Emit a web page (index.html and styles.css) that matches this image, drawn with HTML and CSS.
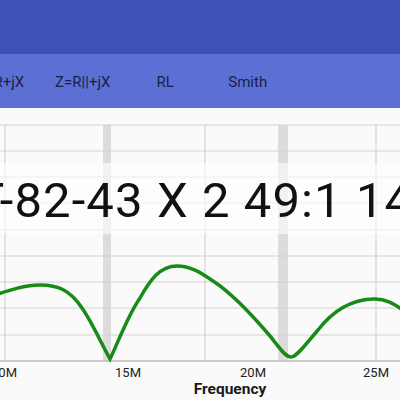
FILE: index.html
```html
<!DOCTYPE html>
<html lang="en">
<head>
    <meta charset="UTF-8">
    <meta name="viewport" content="width=device-width, initial-scale=1.0">
    <title>Antenna Analyzer</title>
    <link rel="stylesheet" href="styles.css">
</head>
<body>
    <div class="appbar"></div>
    <div class="tabs">
        <div class="tab">Z=R+jX</div>
        <div class="tab">Z=R||+jX</div>
        <div class="tab">RL</div>
        <div class="tab">Smith</div>
    </div>
    <div class="chart">
        <svg class="plot" width="400" height="292" viewBox="0 108 400 292">
            <!-- marker bands -->
            <rect x="103" y="125" width="8" height="236" fill="#dcdcdc"/>
            <rect x="278" y="125" width="10" height="236" fill="#dcdcdc"/>
            <!-- grid -->
            <g stroke="#d2d2d2" stroke-width="1.2">
                <line x1="0" y1="125" x2="400" y2="125"/>
                <line x1="0" y1="151" x2="400" y2="151"/>
                <line x1="0" y1="177" x2="400" y2="177"/>
                <line x1="0" y1="203" x2="400" y2="203"/>
                <line x1="0" y1="230" x2="400" y2="230"/>
                <line x1="0" y1="256" x2="400" y2="256"/>
                <line x1="0" y1="282" x2="400" y2="282"/>
                <line x1="0" y1="308" x2="400" y2="308"/>
                <line x1="0" y1="335" x2="400" y2="335"/>
                <line x1="5" y1="125" x2="5" y2="361"/>
                <line x1="205" y1="125" x2="205" y2="361"/>
                <line x1="376" y1="125" x2="376" y2="361"/>
            </g>
            <line x1="0" y1="361" x2="400" y2="361" stroke="#bdbdbd" stroke-width="1.5"/>
            <path d="M -5 295 C 10 290, 25 285, 40 285 C 58 285, 70 290, 82 308 C 92 322, 102 345, 110 359 C 117 345, 128 315, 140 298 C 150 280, 160 266, 177 266 C 190 266, 200 272, 213 281 C 233 294, 253 316, 270 336 C 279 347, 285 357, 291 357 C 297 357, 305 345, 318 330 C 332 312, 350 300, 372 299 C 385 298, 395 304, 405 312" fill="none" stroke="#188a18" stroke-width="3.5" stroke-linecap="round"/>
            <g class="ticks" text-anchor="middle">
                <text x="4" y="377">10M</text>
                <text x="128" y="377">15M</text>
                <text x="253" y="377">20M</text>
                <text x="376" y="377">25M</text>
            </g>
            <text class="axis-title" x="230" y="394" text-anchor="middle">Frequency</text>
        </svg>
        <div class="readout">T-82-43 X 2 49:1 14</div>
    </div>
</body>
</html>
```

FILE: styles.css
```css
body {
    margin: 0;
    width: 400px;
    height: 400px;
    overflow: hidden;
    font-family: Roboto, "Liberation Sans", sans-serif;
    background-color: #fafafa;
}
.appbar {
    height: 54px;
    background-color: #3f51b5;
}
.tabs {
    display: flex;
    height: 54px;
    margin-left: -41px;
    background-color: #5c6fd5;
}
.tab {
    flex: 0 0 82.5px;
    display: flex;
    align-items: center;
    justify-content: center;
    padding-top: 2px;
    font-size: 15px;
    color: #1a1f45;
    white-space: nowrap;
}
.chart {
    position: relative;
    height: 292px;
}
.plot {
    display: block;
}
.ticks {
    font-size: 13px;
    fill: #222;
}
.axis-title {
    font-size: 15.5px;
    font-weight: bold;
    fill: #1a1a1a;
}
.readout {
    position: absolute;
    left: 0;
    right: 0;
    top: 55px;
    height: 71px;
    line-height: 75px;
    background: rgba(255, 255, 255, 0.6);
    color: #111;
    font-size: 49px;
    letter-spacing: 1.1px;
    white-space: nowrap;
    text-indent: -25px;
    overflow: hidden;
}
```
